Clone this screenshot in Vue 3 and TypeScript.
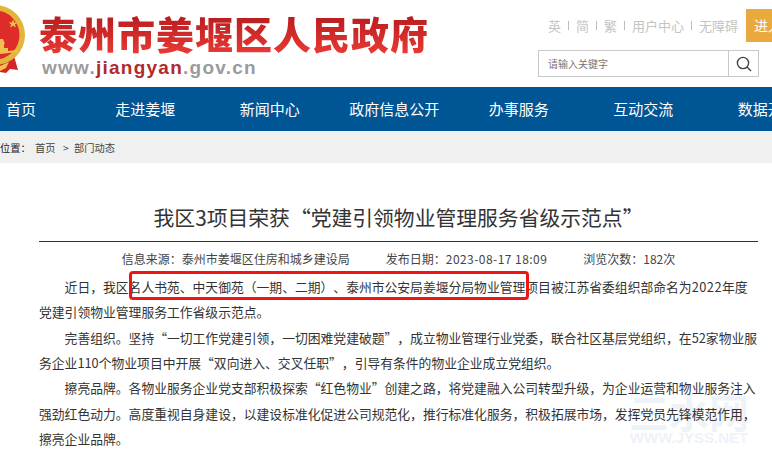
<script setup lang="ts">
const navItems = ["首页", "走进姜堰", "新闻中心", "政府信息公开", "办事服务", "互动交流", "数据开放"];
const topLinks = ["英", "简", "繁", "用户中心", "无障碍"];
</script>

<template>
    <div class="page">
        <header class="header">
            <div class="brand">
                <svg class="emblem" width="28" height="76" viewBox="0 0 28 76">
                    <path d="M0 58 L14 56 L18 70 L10 69 L6 73 L0 72 Z" fill="#d5232a" />
                    <circle cx="-5" cy="35" r="30" fill="#e3b53a" />
                    <circle cx="-5" cy="35" r="24.5" fill="#dd2c2a" />
                    <path d="M13 19.5 l1.2 3 3.2 0 -2.5 2 1 3.1 -2.9 -1.9 -2.9 1.9 1 -3.1 -2.5 -2 3.2 0 Z" fill="#eec04a" />
                    <path d="M0 39 h3 l2 5 h-1 v4 h4 v3 l10 -1 v2 L0 54 Z" fill="#efc24c" />
                    <path d="M0 66 L9 62 L6 68 L0 71 Z" fill="#efc24c" />
                </svg>
                <div class="brand-text">
                    <div class="site-name">泰州市姜堰区人民政府</div>
                    <div class="site-url">www.<span>jiangyan</span>.gov.cn</div>
                </div>
            </div>
            <div class="tools">
                <div class="tools-top">
                    <div class="links">
                        <template v-for="(link, i) in topLinks" :key="link">
                            <i v-if="i > 0" class="sep"></i>
                            <span>{{ link }}</span>
                        </template>
                    </div>
                    <div class="enter">进入</div>
                </div>
                <div class="search">
                    <div class="search-input">请输入关键字</div>
                    <div class="search-btn">
                        <svg width="16" height="16" viewBox="0 0 16 16" fill="none" stroke="#444" stroke-width="1.4">
                            <circle cx="7" cy="7" r="5.6" />
                            <path d="M11 11 L15 15" />
                        </svg>
                    </div>
                </div>
            </div>
        </header>

        <nav class="nav">
            <a v-for="item in navItems" :key="item">{{ item }}</a>
        </nav>

        <div class="crumbs">
            <span class="here">位置：</span>
            <span class="home">首页</span>
            <span class="gt">&gt;</span>
            <span>部门动态</span>
        </div>

        <main class="article">
            <h1 class="title">我区3项目荣获“党建引领物业管理服务省级示范点”</h1>
            <div class="meta">
                <span>信息来源：泰州市姜堰区住房和城乡建设局</span>
                <span>发布日期：<span class="date">2023-08-17 18:09</span></span>
                <span>浏览次数：182次</span>
            </div>
            <div class="body">
                <p>近日，我区名人书苑、中天御苑（一期、二期）、泰州市公安局姜堰分局物业管理项目被江苏省委组织部命名为<span class="year">2022</span>年度党建引领物业管理服务工作省级示范点。</p>
                <p>完善组织。坚持“一切工作党建引领，一切困难党建破题”，成立物业管理行业党委，联合社区基层党组织，在52家物业服务企业110个物业项目中开展“双向进入、交叉任职”，引导有条件的物业企业成立党组织。</p>
                <p>擦亮品牌。各物业服务企业党支部积极探索“红色物业”创建之路，将党建融入公司转型升级，为企业运营和物业服务注入强劲红色动力。高度重视自身建设，以建设标准化促进公司规范化，推行标准化服务，积极拓展市场，发挥党员先锋模范作用，擦亮企业品牌。</p>
            </div>
            <div class="mark"></div>
            <div class="watermark">
                <div class="wm-cn">三水网</div>
                <div class="wm-en">WWW.JYSS.NET</div>
            </div>
        </main>
    </div>
</template>

<style scoped>
.page {
    width: 772px;
    height: 456px;
    overflow: hidden;
    background: #fff;
    font-family: "Noto Sans CJK SC", "Liberation Sans", sans-serif;
    text-spacing-trim: space-all;
    color: #333;
}

.header {
    height: 87px;
    display: flex;
    justify-content: space-between;
}

.brand {
    display: flex;
}

.emblem {
    display: block;
    flex: none;
}

.brand-text {
    margin-left: 11px;
    padding-top: 11px;
}

.site-name {
    font-size: 38px;
    line-height: 44px;
    font-weight: 900;
    letter-spacing: 1px;
    white-space: nowrap;
    background: linear-gradient(#b3191c, #ea3a35);
    -webkit-background-clip: text;
    background-clip: text;
    color: transparent;
}

.site-url {
    margin: 2px 0 0 3px;
    font-family: "Liberation Sans", sans-serif;
    font-size: 19px;
    line-height: 22px;
    font-weight: 700;
    letter-spacing: 1.25px;
    color: #9b9b9b;
}

.site-url span {
    color: #b2292c;
}

.tools {
    width: 234px;
    padding-top: 9px;
    box-sizing: border-box;
}

.tools-top {
    display: flex;
    justify-content: flex-end;
    height: 33px;
}

.links {
    display: flex;
    align-items: center;
    gap: 7px;
    margin-right: 8px;
    font-size: 13px;
    color: #c4c4c4;
    white-space: nowrap;
}

.sep {
    width: 1px;
    height: 9px;
    background: #bbb;
}

.enter {
    width: 26px;
    overflow: hidden;
    padding-left: 8px;
    box-sizing: border-box;
    background: #eaa93c;
    color: #fff;
    font-size: 14px;
    line-height: 33px;
    white-space: nowrap;
}

.search {
    display: flex;
    width: 221px;
    height: 27px;
    margin-top: 8px;
    border: 1px solid #c8c8c8;
    box-sizing: border-box;
}

.search-input {
    flex: 1;
    padding-left: 9px;
    font-size: 10px;
    line-height: 25px;
    color: #777;
}

.search-btn {
    width: 29px;
    display: flex;
    align-items: center;
    justify-content: center;
    border-left: 1px solid #c8c8c8;
}

.nav {
    height: 44px;
    display: flex;
    background: #005594;
    overflow: hidden;
}

.nav a {
    flex: none;
    width: 124.5px;
    text-align: center;
    font-size: 15px;
    line-height: 44px;
    color: #fff;
    white-space: nowrap;
}

.nav a:first-child {
    width: 42px;
    margin-right: 41px;
}

.crumbs {
    height: 32px;
    display: flex;
    align-items: center;
    background: #f0f0f0;
    font-size: 10.24px;
    color: #444;
    white-space: nowrap;
}

.here {
    width: 35px;
    color: #222;
}

.home {
    width: 28px;
}

.gt {
    width: 11px;
}

.article {
    position: relative;
    z-index: 0;
    padding: 0 14px 0 39px;
}

.title {
    margin: 0;
    height: 78px;
    border-bottom: 1px solid #333;
    font-size: 20.8px;
    font-weight: 400;
    line-height: 108px;
    text-align: center;
    white-space: nowrap;
}

.meta {
    display: flex;
    justify-content: center;
    gap: 36px;
    margin-top: 6px;
    font-size: 12px;
    line-height: 22px;
    color: #444;
}

.date {
    letter-spacing: 0.45px;
}

.body {
    margin-top: 4px;
}

.body p {
    margin: 0;
    font-size: 12.8px;
    line-height: 25.33px;
    text-indent: 2em;
}

.year {
    letter-spacing: 0.5px;
}

.mark {
    position: absolute;
    left: 129px;
    top: 108px;
    width: 400px;
    height: 29px;
    border: 3px solid #f01414;
    border-radius: 4px;
    box-sizing: border-box;
}

.watermark {
    position: absolute;
    z-index: -1;
    left: 628px;
    top: 229px;
    width: 122px;
    text-align: center;
    color: #eef3f9;
    pointer-events: none;
}

.wm-cn {
    font-size: 40px;
    line-height: 38px;
    font-weight: 700;
    white-space: nowrap;
}

.wm-en {
    font-family: "Liberation Sans", sans-serif;
    font-size: 15px;
    line-height: 16px;
    font-weight: 700;
    white-space: nowrap;
}
</style>

<style>
html,
body {
    margin: 0;
    overflow: hidden;
}
</style>
